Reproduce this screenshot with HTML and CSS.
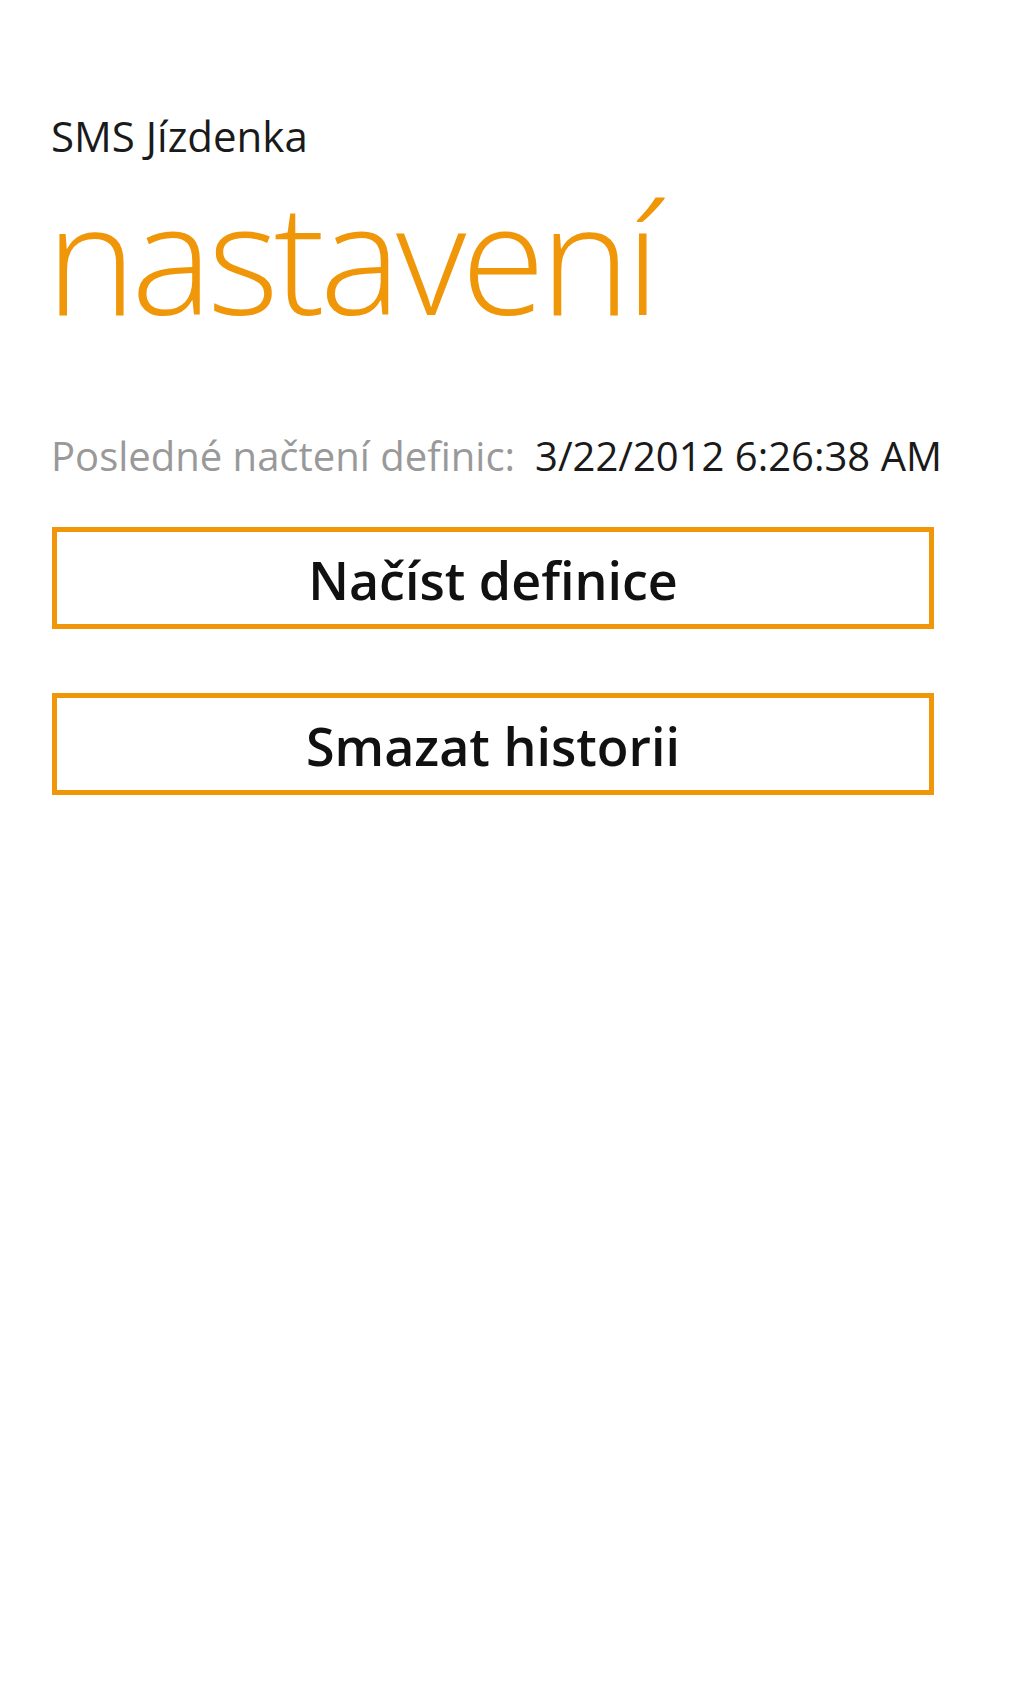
FILE: index.html
```html
<!DOCTYPE html>
<html lang="cs">
<head>
<meta charset="utf-8">
<title>SMS Jízdenka - nastavení</title>
<link rel="stylesheet" href="styles.css">
</head>
<body>
<div class="page">
  <header class="title-panel">
    <div class="app-title">SMS Jízdenka</div>
    <h1 class="page-title">nastavení</h1>
  </header>
  <main class="content">
    <div class="info-row">
      <span class="info-label">Posledné načtení definic:</span>
      <span class="info-value">3/22/2012 6:26:38 AM</span>
    </div>
    <button class="wp-button btn-load">Načíst definice</button>
    <button class="wp-button btn-clear">Smazat historii</button>
  </main>
</div>
</body>
</html>
```

FILE: styles.css
```css
html, body {
  margin: 0;
  padding: 0;
  background: #ffffff;
}

body {
  font-family: "Open Sans", "Noto Sans", sans-serif;
  color: #1a1a1a;
  width: 1024px;
  height: 1707px;
}

.page {
  padding: 114px 90px 0 51px;
}

.title-panel {
  display: flex;
  flex-direction: column;
}

.app-title {
  font-size: 42px;
  line-height: 44px;
  font-weight: 400;
  color: #1a1a1a;
}

.page-title {
  margin: 3px 0 0 -5px;
  font-size: 153px;
  line-height: 190px;
  font-weight: 300;
  letter-spacing: -5px;
  color: #f09609;
}

.content {
  display: flex;
  flex-direction: column;
  margin-top: 76px;
}

.info-row {
  display: flex;
  gap: 20px;
  font-size: 40px;
  line-height: 58px;
  white-space: nowrap;
}

.info-label {
  color: #999999;
}

.info-value {
  color: #1a1a1a;
}

.wp-button {
  display: flex;
  align-items: center;
  justify-content: center;
  box-sizing: border-box;
  width: 882px;
  height: 102px;
  margin: 0 0 0 1px;
  padding: 3px 0 0 0;
  border: 5px solid #f09609;
  background: #ffffff;
  font-family: "Open Sans", "Noto Sans", sans-serif;
  font-size: 52px;
  font-weight: 600;
  line-height: 88px;
  color: #111111;
}

.btn-load {
  margin-top: 42px;
}

.btn-clear {
  margin-top: 64px;
}
```
